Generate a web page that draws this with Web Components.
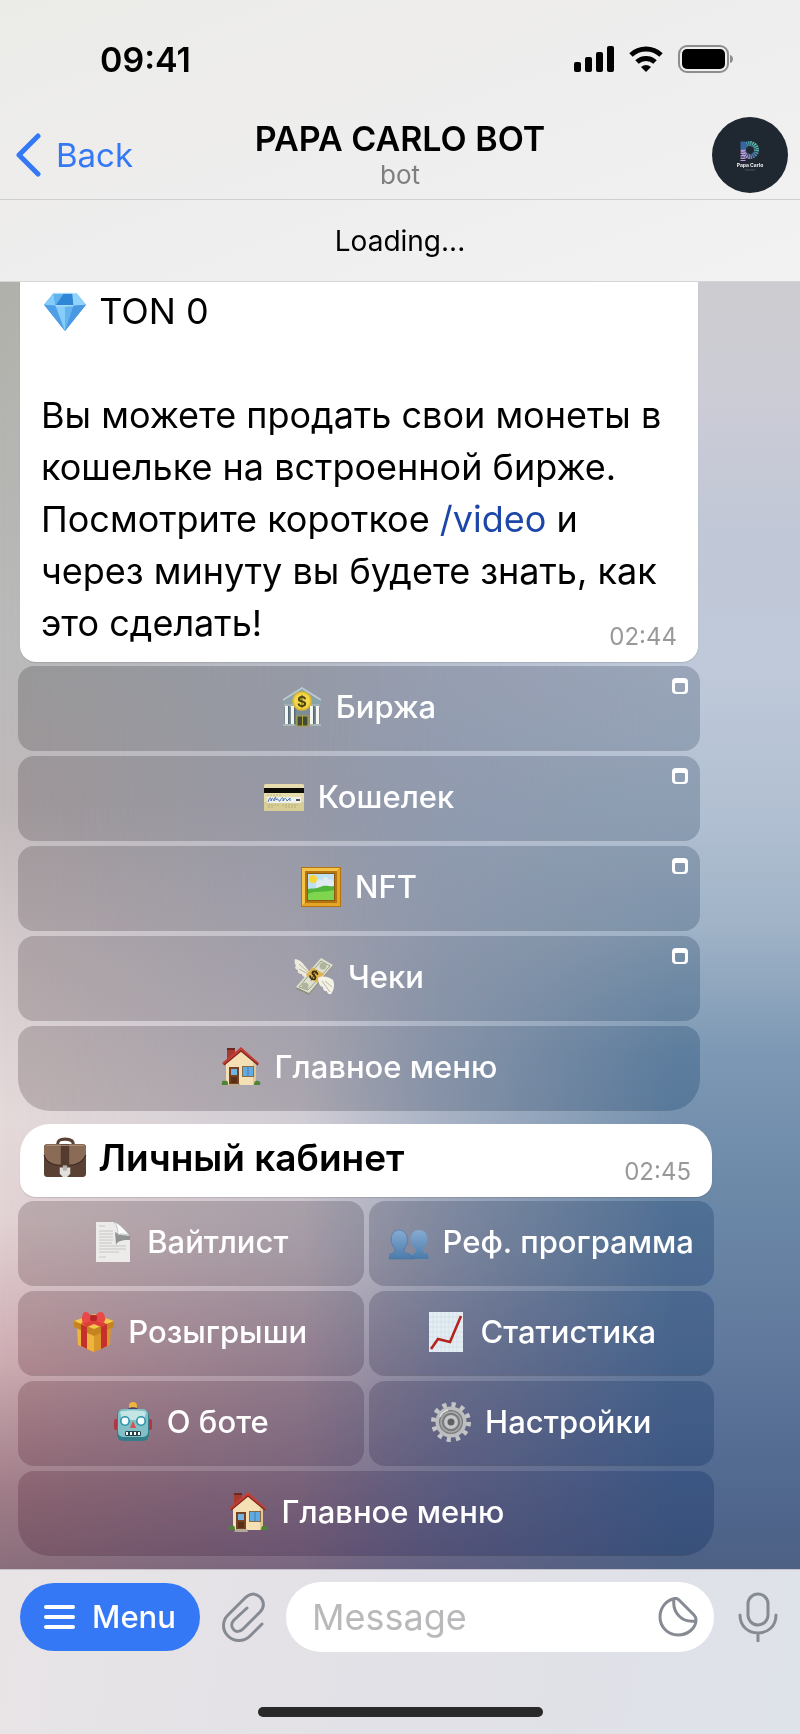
<!DOCTYPE html>
<html lang="ru">
<head>
<meta charset="utf-8">
<meta name="viewport" content="width=device-width, initial-scale=1">
<title>PAPA CARLO BOT</title>
<style>
  body {
    margin: 0;
    font-family: Inter, "Liberation Sans", sans-serif;
    color: #000;
  }
</style>
</head>
<body>
<chat-screen>
  <status-bar slot="top"></status-bar>
  <chat-header slot="top" name="PAPA CARLO BOT" status="bot"></chat-header>
  <loading-bar slot="top">Loading...</loading-bar>

  <message-group style="--space-right: 100px">
    <message-bubble time="02:44" class="cut">
      <emoji-icon name="gem"></emoji-icon> TON 0<br>
      <br>
      Вы можете продать свои монеты в<br>
      кошельке на встроенной бирже.<br>
      Посмотрите короткое <a href="#video">/video</a> и<br>
      через минуту вы будете знать, как<br>
      это сделать!
    </message-bubble>
    <inline-button slot="keys" icon="bank" webapp wide>Биржа</inline-button>
    <inline-button slot="keys" icon="card" webapp wide>Кошелек</inline-button>
    <inline-button slot="keys" icon="frame" webapp wide>NFT</inline-button>
    <inline-button slot="keys" icon="money" webapp wide>Чеки</inline-button>
    <inline-button slot="keys" icon="house" wide last>Главное меню</inline-button>
  </message-group>

  <message-group style="--space-right: 86px">
    <message-bubble time="02:45" class="bold">
      <emoji-icon name="briefcase"></emoji-icon> Личный кабинет
    </message-bubble>
    <inline-button slot="keys" icon="page">Вайтлист</inline-button>
    <inline-button slot="keys" icon="people">Реф. программа</inline-button>
    <inline-button slot="keys" icon="gift">Розыгрыши</inline-button>
    <inline-button slot="keys" icon="chart">Статистика</inline-button>
    <inline-button slot="keys" icon="robot">О боте</inline-button>
    <inline-button slot="keys" icon="gear">Настройки</inline-button>
    <inline-button slot="keys" icon="house" wide last>Главное меню</inline-button>
  </message-group>

  <message-composer slot="bottom"></message-composer>
</chat-screen>

<script>
// every icon is drawn on a 40x40 grid
const ICONS = {
  gem: `
    <path d="M9 3h22l9 11-20 25L0 14z" fill="#52a9ee"/>
    <path d="M9 3L0 14l11 1z" fill="#83cdf8"/><path d="M9 3h10l-8 12z" fill="#5fb2ee"/>
    <path d="M19 3h8l1 12H11z" fill="#2f86d4"/><path d="M27 3h4l9 11-12 1z" fill="#91d3fa"/>
    <path d="M0 14l11 1 9 24z" fill="#4f9fe6"/><path d="M11 15h17l-8 24z" fill="#86cdf9"/>
    <path d="M20 16l8-1-8 24z" fill="#62b4f1"/><path d="M40 14l-12 1-8 24z" fill="#4a97e2"/>
    <path d="M11 15h17M9 3h22" stroke="#c5eaff" stroke-width="1" fill="none"/>`,
  bank: `
    <path d="M1 13L20 0l19 13v4H1z" fill="#8ca2aa"/><path d="M1 13L20 1l19 12" stroke="#bccbd0" stroke-width="1.6" fill="none"/>
    <path d="M2 17h36v20H2z" fill="#7b8e96"/><path d="M2 17h36v3H2z" fill="#9fb1b7"/>
    <path d="M3 19h3v19H3zM9 19h3v19H9zM28 19h3v19h-3zM34 19h3v19h-3z" fill="#f5f6f4"/>
    <path d="M6 19h1.400v19H6zM12 19h1.400v19H12zM31 19h1.400v19H31z" fill="#56676f"/>
    <path d="M15 29h11v10H15z" fill="#404b38" stroke="#b0a038" stroke-width="1.200"/><path d="M20.500 29v10" stroke="#b0a038"/>
    <path d="M1 37h12v2H1zM28 37h11v2H28z" fill="#a9b7bb"/>
    <circle cx="20" cy="14" r="9.800" fill="#e2b928"/><circle cx="20" cy="14" r="8" fill="#f3d84c"/>
    <text x="20" y="19.500" font-size="15" font-weight="700" text-anchor="middle" fill="#4e430f">$</text>`,
  card: `
    <rect y="7" width="40" height="27" rx="1.500" fill="#e6dcae"/><path d="M0 25h40v8a1 1 0 0 1-1 1H1a1 1 0 0 1-1-1z" fill="#d8cd95"/>
    <rect y="11" width="40" height="5" fill="#0c0b08"/><rect x="3" y="20" width="34" height="6" fill="#eef0ee"/>
    <path d="M4 25c2-6 3-5 3-1 1-4 2-3 3 0 1-5 2-5 2-1 3-3 2 2 4 1 2-5 4-4 3 0 2-4 3-3 4 0l3-3v3" stroke="#3b65b0" stroke-width=".9" fill="none"/>
    <path d="M32 23h4" stroke="#222" stroke-width="1.500"/><path d="M3 18h15M4 28h11M18 28h16M4 30h6M21 30h12" stroke="#b3a877" stroke-width=".8" stroke-dasharray="2 1"/>`,
  frame: `
    <path d="M0 0h40v40H0z" fill="#b57412"/><path d="M1 1h38l-3 3H4v32l-3 3z" fill="#f3c34a"/><path d="M39 1v38H1l3-3h32V4z" fill="#e5a628"/>
    <path d="M6 6h28v28H6z" fill="#8b5a10"/><path d="M7 7h26v26H7z" fill="#bfe0f2"/>
    <path d="M15 15c2-4 5-3 6-1 2-6 6-4 7-1 3-2 4 1 5 3v5H15z" fill="#dfeaf2"/>
    <circle cx="12" cy="12" r="4" fill="#f6d637"/>
    <path d="M7 22c5-1 8 0 12-2 6-3 9 0 14-1v14H7z" fill="#52b53a"/><path d="M7 27c9-4 16-1 26-4v10H7z" fill="#7fd64e"/>`,
  money: `
    <path d="M17 16C12 12 9 3 1 2c-1 3 0 5 1 7-2 1 0 4 2 4-1 3 2 4 4 4 0 3 4 4 7 3z" fill="#eeebdd"/>
    <path d="M5 7l9 8M5 12l9 5" stroke="#b9b5a3" fill="none"/>
    <path d="M2 32L27 2l12 7-24 29z" fill="#8f8f7c"/><path d="M2 30L27 1l12 7-24 28z" fill="#dfdfce"/>
    <path d="M5 30L27 4l9 5-22 24z" fill="none" stroke="#9aa08b"/>
    <circle cx="29" cy="9" r="3.500" fill="#aeb49e"/><circle cx="11" cy="29" r="3.500" fill="#aeb49e"/>
    <path d="M12 18l6-8 12 7-7 9z" fill="#e0b452"/>
    <text x="20" y="23" font-size="13" font-weight="700" text-anchor="middle" fill="#3a300e" transform="rotate(30 20 18)">$</text>
    <path d="M24 21c4-3 11-1 15 2 2 5 1 10-2 14-3 1-4-2-4-3-3 1-4-2-4-4-3 0-5-5-5-9z" fill="#f4f1e5"/>
    <path d="M28 24l8 11M31 24l7 6" stroke="#bbb7a6" fill="none"/>`,
  house: `
    <path d="M6 1h8v14H6z" fill="#a63a30"/><path d="M6 1h8v2H6z" fill="#6d2722"/>
    <path d="M5 16L20 3l15 13v22H5z" fill="#f4e0b4"/><path d="M35 16v22h-3V14z" fill="#e0c896"/>
    <path d="M20 0L1 16l2 2L20 4l17 14 1-2z" fill="#c33f36"/><path d="M3 18L20 4l17 14" fill="none" stroke="#7b2620" stroke-width="1.200"/>
    <path d="M8 20h10v18H8z" fill="#754223"/><path d="M10 22h6v6h-6z" fill="#70b4e4"/><path d="M10 30h6v6h-6z" fill="#5a2f17"/>
    <path d="M21 19h12v11H21z" fill="#8a6a45"/><path d="M22 20h10v9H22z" fill="#62abe2"/><path d="M27 20v9" stroke="#417daf"/>
    <path d="M8 37h11l1 3H6z" fill="#b2a99b"/>
    <path d="M1 38c-1-4 1-5 3-4 3-1 3 2 3 4zM33 38c0-4 2-5 4-4 2 0 3 2 2 4z" fill="#4d8433"/>`,
  briefcase: `
    <path d="M13 7c0-4 2-5 7-5s8 1 8 5" stroke="#5a4336" stroke-width="3" fill="none"/>
    <rect y="7" width="40" height="31" rx="3" fill="#5a4134"/><path d="M0 10c0-2 1-3 3-3h34c2 0 3 1 3 3v7c-3 7-9 10-17 10h-6C9 27 2 24 0 17z" fill="#8a6b56"/>
    <path d="M0 17c2 7 9 10 17 10h6c8 0 14-3 17-10" fill="none" stroke="#3c2a22"/>
    <path d="M16 7h8v21h-8z" fill="#533b2e"/><path d="M2 8h36" stroke="#a88a74"/>
    <path d="M15 29h10v6l-3 3h-4l-3-3z" fill="#e2e0dc"/><path d="M18 27h4v5h-4z" fill="#b7b3ad"/>`,
  page: `
    <path d="M3 0h18c7 3 10 8 16 14v26H3z" fill="#ecebea"/><path d="M22 10c6 4 10 3 15 4v4c-6 0-12 0-14 5z" fill="#8f9392"/>
    <path d="M21 0c5 1 12 9 16 14-5-3-11-2-12-1 0-6-1-10-4-13z" fill="#fbfbfb" stroke="#a2a6a5" stroke-width=".6"/>
    <path d="M6 4h6M6 9h14M6 12h14M6 15h14M6 18h14M6 21h13M6 24h27M6 27h27M6 30h20M6 35h7" stroke="#bdbdbd" stroke-width=".8"/>`,
  people: `
    <linearGradient id="bust" x2="0" y2="1"><stop stop-color="#85abd2"/><stop offset="1" stop-color="#4b7bab"/></linearGradient>
    <path d="M20 37l4-5c3-1 3-2 3-5-8-6-7-19 3-19s11 13 4 19c0 3 1 4 5 5l1 5z" fill="url(#bust)"/>
    <path d="M0 37l1-5c4-1 5-2 5-5C0 21 1 8 10 8s11 13 5 19c0 3 1 4 6 5l4 5z" fill="url(#bust)" stroke="#48749f" stroke-width=".6"/>`,
  gift: `
    <path d="M3 15l17 8v17L4 33zM37 15l-17 8v17l16-7z" fill="#d9962a"/><path d="M3 15l17 8v17L4 33z" fill="#edb53c"/>
    <path d="M0 9l20-7 20 7v6l-20 9L0 15z" fill="#c58420"/><path d="M0 9l20-7 20 7-20 8z" fill="#f4c94d"/>
    <path d="M7 12l6 3v22l-6-3zM27 15l6-3v22l-6 3z" fill="#c52f2c"/><path d="M7 11L26 4l6 3-19 8zM14 4l19 8-6 3L8 7z" fill="#dc4038"/>
    <path d="M19 6C14-1 10-1 9 2c-2 5-1 8 1 9 4 0 6-2 9-4zM20 6c4-7 8-7 10-4 2 5 1 8-1 9-4 0-6-2-9-4z" fill="#e94a45"/>
    <rect x="16" y="3" width="7" height="6" rx="2" fill="#b8282b"/>`,
  chart: `
    <path d="M3 0h34v40H3z" fill="#e4edf3"/><path d="M7 0v40M11 0v40M15 0v40M19 0v40M23 0v40M27 0v40M31 0v40M3 5h34M3 10h34M3 15h34M3 20h34M3 25h34M3 30h34M3 35h34" stroke="#cfdbe5" stroke-width=".6"/>
    <path d="M5 37l7-10 12 3L35 4" fill="none" stroke="#b5231f" stroke-width="2.600"/>`,
  robot: `
    <circle cx="20" cy="4" r="4" fill="#f0b63a"/><path d="M14 9c0-5 12-5 12 0z" fill="#42406f"/>
    <rect x="1" y="17" width="38" height="11" rx="2" fill="#b33543"/>
    <rect x="4" y="7" width="32" height="32" rx="6" fill="#347d8b"/><rect x="5" y="7" width="30" height="28" rx="5" fill="#83bfc6"/><path d="M7 10c2-2 24-2 26 0l-2 8H9z" fill="#c3e6e5"/>
    <circle cx="12" cy="19" r="5" fill="#2b93a9"/><circle cx="28" cy="19" r="5" fill="#2b93a9"/><circle cx="12" cy="19" r="3.400" fill="#f3ffff"/><circle cx="28" cy="19" r="3.400" fill="#f3ffff"/>
    <path d="M20 19l3 7h-6z" fill="#d7504c"/><rect x="12" y="29" width="16" height="5" rx="1.500" fill="#23434b"/><path d="M14 30v3M18 30v3M22 30v3M26 30v3" stroke="#fff" stroke-width="2"/>`,
  gear: `
    <circle cx="20" cy="20" r="17.500" fill="none" stroke="#c4c5c6" stroke-width="5" stroke-dasharray="4.162 5" />
    <circle cx="20" cy="20" r="15.500" fill="#bcbdbe"/><circle cx="20" cy="20" r="12" fill="#7a7b7d"/>
    <circle cx="20" cy="20" r="10" fill="none" stroke="#a9aaac" stroke-width="1.500"/><circle cx="20" cy="20" r="7" fill="#c5c6c7"/>
    <circle cx="20" cy="20" r="3.500" fill="#606164"/><path d="M9 15a12 12 0 0 1 8-7" stroke="#dedfdf" stroke-width="1.500" fill="none"/>`
};

class EmojiIcon extends HTMLElement {
  connectedCallback() {
    this.attachShadow({ mode: 'open' });
    this.shadowRoot.innerHTML = `
      <style>
        :host {
          display: inline-block;
          width: 40px;
          height: 40px;
          flex: none;
        }
        svg {
          display: block;
          width: 100%;
          height: 100%;
          overflow: visible;
        }
      </style>
      <svg viewBox="0 0 40 40" aria-hidden="true">${ICONS[this.getAttribute('name')]}</svg>
    `;
  }
}
customElements.define('emoji-icon', EmojiIcon);

class StatusBar extends HTMLElement {
  connectedCallback() {
    this.attachShadow({ mode: 'open' });
    this.shadowRoot.innerHTML = `
      <style>
        :host {
          display: flex;
          align-items: center;
          justify-content: space-between;
          height: 110px;
          padding: 8px 66px 0 100px;
          box-sizing: border-box;
        }
        time {
          font-size: 34px;
          font-weight: 600;
        }
        .icons {
          display: flex;
          align-items: center;
          gap: 14px;
        }
        svg { display: block; }
      </style>
      <time>09:41</time>
      <div class="icons">
        <svg width="42" height="26" viewBox="0 0 42 26">
          <rect x="2" y="16" width="7" height="10" rx="2"/><rect x="13" y="11" width="7" height="15" rx="2"/>
          <rect x="24" y="6" width="7" height="20" rx="2"/><rect x="35" y="0" width="7" height="26" rx="2"/>
        </svg>
        <svg width="36" height="26" viewBox="0 0 36 26" fill="none" stroke="#000" stroke-width="5">
          <path d="M3 9a22 22 0 0 1 30 0"/><path d="M9 16a13 13 0 0 1 18 0"/>
          <path d="M18 26l-5-5a8 8 0 0 1 10 0z" fill="#000" stroke="none"/>
        </svg>
        <svg width="56" height="28" viewBox="0 0 56 28">
          <rect x="1" y="1" width="49" height="26" rx="8" fill="none" stroke="#8d8d8d" stroke-width="2"/>
          <rect x="4" y="4" width="43" height="20" rx="5"/><path d="M52 10c4 1 4 7 0 8z" fill="#8d8d8d"/>
        </svg>
      </div>
    `;
  }
}
customElements.define('status-bar', StatusBar);

class ChatHeader extends HTMLElement {
  connectedCallback() {
    this.attachShadow({ mode: 'open' });
    this.shadowRoot.innerHTML = `
      <style>
        :host {
          display: grid;
          grid-template-columns: 1fr auto 1fr;
          align-items: center;
          height: 90px;
          padding: 0 12px;
          box-sizing: border-box;
          border-bottom: 1px solid #cfcfd0;
        }
        .back {
          display: flex;
          align-items: center;
          gap: 14px;
          color: #3478f6;
          font-size: 33px;
          text-decoration: none;
        }
        .title { text-align: center; }
        h1 {
          margin: 0;
          font-size: 34px;
          line-height: 40px;
          font-weight: 600;
        }
        p {
          margin: 0;
          color: #7f7f81;
          font-size: 26px;
          line-height: 32px;
        }
        .avatar {
          justify-self: end;
          width: 76px;
          height: 76px;
        }
      </style>
      <a class="back" href="#chats">
        <svg width="30" height="44" viewBox="0 0 30 44" fill="none" stroke="#3478f6" stroke-width="5" stroke-linecap="round" stroke-linejoin="round"><path d="M26 3L7 22l19 19"/></svg>
        <span>Back</span>
      </a>
      <div class="title">
        <h1>${this.getAttribute('name')}</h1>
        <p>${this.getAttribute('status')}</p>
      </div>
      <svg class="avatar" viewBox="0 0 76 76">
        <linearGradient id="ray" x1="0" y1="1" x2="1" y2="0"><stop stop-color="#c9a2e4"/><stop offset=".4" stop-color="#4b77b5"/><stop offset="1" stop-color="#55c7a4"/></linearGradient>
        <circle cx="38" cy="38" r="38" fill="#1f2730"/>
        <circle cx="38" cy="33" r="6.500" fill="none" stroke="url(#ray)" stroke-width="5" stroke-dasharray="1.400 .6"/>
        <path d="M31 24.500v8" stroke="#3566a2" stroke-width="5"/><path d="M31 33v11" stroke="#b99bd9" stroke-width="5" stroke-dasharray="1.500 1"/>
        <text x="38" y="50" text-anchor="middle" font-size="5" font-weight="700" fill="#f2f2f4">Papa Carlo</text>
        <path d="M33 53h10" stroke="#4b535d"/>
      </svg>
    `;
  }
}
customElements.define('chat-header', ChatHeader);

class LoadingBar extends HTMLElement {
  connectedCallback() {
    this.attachShadow({ mode: 'open' });
    this.shadowRoot.innerHTML = `
      <style>
        :host {
          display: flex;
          align-items: center;
          justify-content: center;
          height: 82px;
          box-sizing: border-box;
          border-bottom: 1px solid #d6d5d6;
          font-size: 28px;
        }
      </style>
      <slot></slot>
    `;
  }
}
customElements.define('loading-bar', LoadingBar);

class MessageBubble extends HTMLElement {
  connectedCallback() {
    this.attachShadow({ mode: 'open' });
    this.shadowRoot.innerHTML = `
      <style>
        :host {
          display: flex;
          align-items: flex-end;
          justify-content: space-between;
          margin: 0 2px;
          padding: 8px 21px 13px;
          border-radius: 30px 30px 16px 16px;
          background: #fff;
          box-shadow: 0 1px 1px rgba(0, 0, 0, .12);
          font-size: 36px;
          line-height: 52px;
          white-space: nowrap;
        }
        :host(.cut) {
          padding-top: 3px;
          border-radius: 0 0 16px 16px;
        }
        :host(.bold) {
          font-size: 37px;
          font-weight: 600;
        }
        .text {
          flex: 1;
          width: 0;
        }
        time {
          color: #999;
          font-size: 24px;
          font-weight: 400;
          line-height: 24px;
        }
        ::slotted(a) {
          color: #1c46a8;
          text-decoration: none;
        }
        ::slotted(emoji-icon) {
          width: 44px;
          height: 42px;
          margin: 0 2px;
          vertical-align: -8px;
        }
      </style>
      <div class="text"><slot></slot></div>
      <time>${this.getAttribute('time')}</time>
    `;
  }
}
customElements.define('message-bubble', MessageBubble);

class InlineButton extends HTMLElement {
  connectedCallback() {
    const webapp = this.hasAttribute('webapp')
      ? '<svg class="webapp" width="16" height="16" viewBox="0 0 16 16"><path fill="#fff" fill-rule="evenodd" d="M4 0h8a4 4 0 0 1 4 4v8a4 4 0 0 1-4 4H4a4 4 0 0 1-4-4V4a4 4 0 0 1 4-4zM4 5a1 1 0 0 0-1 1v6a2 2 0 0 0 2 2h6a2 2 0 0 0 2-2V6a1 1 0 0 0-1-1z"/></svg>'
      : '';
    this.attachShadow({ mode: 'open' });
    this.shadowRoot.innerHTML = `
      <style>
        :host {
          display: block;
          min-width: 0;
        }
        :host([wide]) { grid-column: 1 / -1; }
        button {
          position: relative;
          display: flex;
          align-items: center;
          justify-content: center;
          gap: 14px;
          width: 100%;
          height: 85px;
          padding: 0 0 4px;
          border: 0;
          border-radius: 16px;
          background: rgba(0, 0, 0, .18);
          backdrop-filter: saturate(1.4);
          color: #fff;
          font: 500 31px/40px Inter, "Liberation Sans", sans-serif;
          white-space: nowrap;
        }
        :host([last]) button { border-radius: 16px 16px 32px 32px; }
        .webapp {
          position: absolute;
          top: 12px;
          right: 12px;
        }
      </style>
      <button type="button">
        <emoji-icon name="${this.getAttribute('icon')}"></emoji-icon>
        <span><slot></slot></span>
        ${webapp}
      </button>
    `;
  }
}
customElements.define('inline-button', InlineButton);

class MessageGroup extends HTMLElement {
  connectedCallback() {
    this.attachShadow({ mode: 'open' });
    this.shadowRoot.innerHTML = `
      <style>
        :host {
          display: flex;
          flex-direction: column;
          gap: 4px;
          margin: 0 var(--space-right) 13px 18px;
        }
        .keys {
          display: grid;
          grid-template-columns: 1fr 1fr;
          gap: 5px;
        }
      </style>
      <slot></slot>
      <div class="keys"><slot name="keys"></slot></div>
    `;
  }
}
customElements.define('message-group', MessageGroup);

class MessageComposer extends HTMLElement {
  connectedCallback() {
    this.attachShadow({ mode: 'open' });
    this.shadowRoot.innerHTML = `
      <style>
        :host {
          display: block;
          padding: 12px 20px 17px;
          border-top: 1px solid #c5c1cb;
          background: linear-gradient(100deg, #e8e4e6, #e2e1e7 50%, #dee2e9);
        }
        form {
          display: flex;
          align-items: center;
        }
        button {
          display: flex;
          flex: none;
          align-items: center;
          justify-content: center;
          padding: 0;
          border: 0;
          background: none;
        }
        .menu {
          gap: 17px;
          width: 180px;
          height: 68px;
          border-radius: 34px;
          background: #3478f6;
          color: #fff;
          font: 500 31px/40px Inter, "Liberation Sans", sans-serif;
        }
        .attach { width: 86px; }
        .field {
          flex: 1;
          display: flex;
          align-items: center;
          min-width: 0;
          height: 70px;
          padding: 0 16px 0 26px;
          border-radius: 35px;
          background: #fff;
        }
        input {
          flex: 1;
          width: 0;
          min-width: 0;
          padding: 0;
          border: 0;
          outline: 0;
          background: none;
          font: 400 36px/44px Inter, "Liberation Sans", sans-serif;
        }
        input::placeholder { color: #b9b9bb; }
        .voice {
          width: 44px;
          margin-left: 22px;
        }
        .home {
          width: 285px;
          height: 10px;
          margin: 55px auto 0;
          border-radius: 5px;
          background: #29292a;
        }
      </style>
      <form>
        <button class="menu" type="button">
          <svg width="31" height="26" viewBox="0 0 31 26" stroke="#fff" stroke-width="4" stroke-linecap="round"><path d="M2 3h27M2 13h27M2 23h27"/></svg>
          <span>Menu</span>
        </button>
        <button class="attach" type="button" aria-label="Attach">
          <svg width="44" height="50" viewBox="0 0 44 50" fill="none" stroke="#858a93" stroke-width="3" stroke-linecap="round" stroke-linejoin="round"><path d="M41 32L29 44C23 50 13 50 7 44c-6-6-6-15 0-21L24 6c5-5 11-5 15-1 5 5 4 11 0 15L22 37c-3 3-7 3-9 1-3-3-3-7 0-10l13-12"/></svg>
        </button>
        <div class="field">
          <input type="text" placeholder="Message" aria-label="Message">
          <button type="button" aria-label="Stickers">
            <svg width="40" height="40" viewBox="0 0 40 40" fill="none" stroke="#858a93" stroke-width="3" stroke-linejoin="round"><path d="M15 2C7 4 2 12 2 20c0 10 8 18 18 18s18-7 18-15c0-2-1-4-2-5L21 3c-2-2-4-2-6-1zM16 2c-2 14 8 24 22 22"/></svg>
          </button>
        </div>
        <button class="voice" type="button" aria-label="Voice message">
          <svg width="40" height="50" viewBox="0 0 40 50" fill="none" stroke="#858a93" stroke-width="3" stroke-linecap="round"><rect x="10" y="2" width="20" height="31" rx="10"/><path d="M2 23c0 24 36 24 36 0M20 41v8"/></svg>
        </button>
      </form>
      <div class="home"></div>
    `;
  }
}
customElements.define('message-composer', MessageComposer);

class ChatScreen extends HTMLElement {
  connectedCallback() {
    this.attachShadow({ mode: 'open' });
    this.shadowRoot.innerHTML = `
      <style>
        :host {
          display: flex;
          flex-direction: column;
          min-height: 100vh;
        }
        header {
          background: linear-gradient(160deg, #ebebe8, #efeeee 50%, #f2f2f2);
        }
        main {
          position: relative;
          flex: 1;
          isolation: isolate;
          background: linear-gradient(#b0b1aa, #bababa 28%, #c0b9ba 40%, #d5cbcd 52%, #e5dada 65%, #e2d2d4 73%, #cdabb1 84%, #a07d88 94%, #8b6e7b);
        }
        /* wallpaper: a middle and a right colour column faded over the left one */
        main::before,
        main::after {
          content: "";
          position: absolute;
          inset: 0;
          z-index: -1;
        }
        main::before {
          background: linear-gradient(#c4c5ca, #b7bdcc 30%, #b5bbcc 42%, #bcbecc 55%, #c8c7d2 66%, #b9b4c1 76%, #978ca0 86%, #716383);
          mask-image: linear-gradient(90deg, transparent, #000 55%);
        }
        main::after {
          background: linear-gradient(#cdccd0, #ccccd6 9%, #c0c7d6 20%, #bfc9da 30%, #b0bfd1 42%, #a0b3c7 50%, #7c98b4 60%, #6d8aa9 70%, #617a9d 82%, #526990 93%, #4c6084);
          mask-image: linear-gradient(90deg, transparent 38%, #000 84%);
        }
      </style>
      <header><slot name="top"></slot></header>
      <main><slot></slot></main>
      <footer><slot name="bottom"></slot></footer>
    `;
  }
}
customElements.define('chat-screen', ChatScreen);
</script>
</body>
</html>
